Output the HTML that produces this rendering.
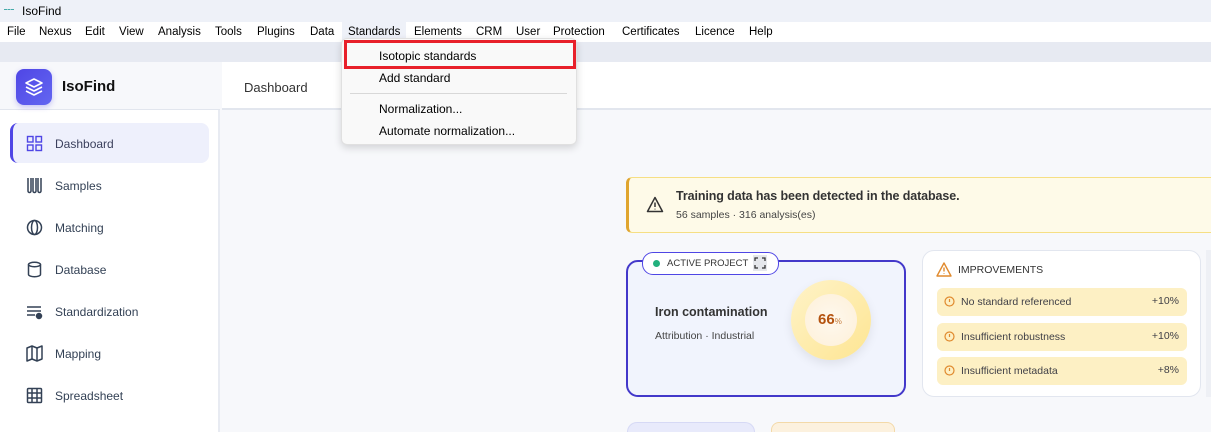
<!DOCTYPE html>
<html><head><meta charset="utf-8"><style>
*{box-sizing:border-box;margin:0;padding:0}
html,body{width:1211px;height:432px;overflow:hidden}
body{position:relative;font-family:"Liberation Sans",sans-serif;background:#f7f8fb;color:#1f2937}
.a{position:absolute;white-space:nowrap}
.menu span{position:absolute;top:26px;font-size:11.5px;color:#000}
.nav{position:absolute;left:55px;font-size:12px;color:#334155;font-weight:500}
.ic{position:absolute;left:26px}
.row{position:absolute;left:937px;width:250px;height:28px;background:#fdf0c4;border-radius:6px;font-size:10.5px;color:#3f3f46}
.row .t{position:absolute;left:24px;top:8px}
.row .v{position:absolute;right:8px;top:7px}
.row svg{position:absolute;left:7px;top:8px}
</style></head><body>
<div class="a" style="left:0;top:0;width:1211px;height:22px;background:#eef1f8"></div>
<div class="a" style="left:4px;top:9px;width:10px;height:2px;border-top:1px dashed #4aa"></div>
<div class="a" style="left:22px;top:4px;font-size:12px;color:#000">IsoFind</div>
<div class="a" style="left:0;top:22px;width:1211px;height:20px;background:#fff"></div>
<div class="a" style="left:342px;top:22px;width:64px;height:20px;background:#eef1f8"></div>
<div class="menu">
<span style="left:7px">File</span><span style="left:39px">Nexus</span><span style="left:85px">Edit</span><span style="left:119px">View</span><span style="left:158px">Analysis</span><span style="left:215px">Tools</span><span style="left:257px">Plugins</span><span style="left:310px">Data</span><span style="left:348px">Standards</span><span style="left:414px">Elements</span><span style="left:476px">CRM</span><span style="left:516px">User</span><span style="left:553px">Protection</span><span style="left:622px">Certificates</span><span style="left:695px">Licence</span><span style="left:749px">Help</span>
</div>
<div class="a" style="left:0;top:42px;width:1211px;height:20px;background:#e7eaf2"></div>
<!-- sidebar -->
<div class="a" style="left:0;top:62px;width:220px;height:370px;background:#fff;border-right:2px solid #e8ebf2"></div>
<div class="a" style="left:0;top:62px;width:220px;height:48px;background:#f7f8fb;border-bottom:1px solid #e2e6ee"></div>
<div class="a" style="left:16px;top:69px;width:36px;height:36px;border-radius:8px;background:linear-gradient(135deg,#4f46e5,#6366f1);box-shadow:0 2px 6px rgba(79,70,229,.3)">
<svg width="36" height="36" viewBox="0 0 36 36" fill="none" stroke="#fff" stroke-width="1.6" stroke-linejoin="round"><path d="M18 10l8 4-8 4-8-4z"/><path d="M10 18l8 4 8-4"/><path d="M10 22l8 4 8-4"/></svg></div>
<div class="a" style="left:62px;top:78px;font-size:15px;font-weight:bold;color:#111">IsoFind</div>
<div class="a" style="left:10px;top:123px;width:199px;height:40px;border-radius:8px;background:#eef0fc;border-left:3px solid #4f46e5"></div>
<svg class="ic" style="top:135px" width="17" height="17" viewBox="0 0 17 17" fill="none" stroke="#4f46e5" stroke-width="1.4"><rect x="1.5" y="1.5" width="5.5" height="5.5"/><rect x="10" y="1.5" width="5.5" height="5.5"/><rect x="1.5" y="10" width="5.5" height="5.5"/><rect x="10" y="10" width="5.5" height="5.5"/></svg>
<div class="nav" style="top:137px;color:#3a3f5c">Dashboard</div>
<svg class="ic" style="top:177px" width="17" height="17" viewBox="0 0 17 17" fill="none" stroke="#334155" stroke-width="1.5"><path d="M2 1v13a1.5 1.5 0 003 0V1M7 1v13a1.5 1.5 0 003 0V1M12 1v13a1.5 1.5 0 003 0V1"/></svg>
<div class="nav" style="top:179px">Samples</div>
<svg class="ic" style="top:219px" width="17" height="17" viewBox="0 0 17 17" fill="none" stroke="#334155" stroke-width="1.5"><circle cx="8.5" cy="8.5" r="7"/><ellipse cx="8.5" cy="8.5" rx="3" ry="7"/></svg>
<div class="nav" style="top:221px">Matching</div>
<svg class="ic" style="top:261px" width="17" height="17" viewBox="0 0 17 17" fill="none" stroke="#334155" stroke-width="1.5"><ellipse cx="8.5" cy="3.5" rx="6" ry="2.2"/><path d="M2.5 3.5v10c0 1.2 2.7 2.2 6 2.2s6-1 6-2.2v-10"/></svg>
<div class="nav" style="top:263px">Database</div>
<svg class="ic" style="top:303px" width="17" height="17" viewBox="0 0 17 17" fill="none" stroke="#334155" stroke-width="1.5"><path d="M1 4h14M1 8h14M1 12h8"/><circle cx="13" cy="13" r="2.5" fill="#334155"/></svg>
<div class="nav" style="top:305px">Standardization</div>
<svg class="ic" style="top:345px" width="17" height="17" viewBox="0 0 17 17" fill="none" stroke="#334155" stroke-width="1.5" stroke-linejoin="round"><path d="M1 3l5-2 5 2 5-2v13l-5 2-5-2-5 2z"/><path d="M6 1v13M11 3v13"/></svg>
<div class="nav" style="top:347px">Mapping</div>
<svg class="ic" style="top:387px" width="17" height="17" viewBox="0 0 17 17" fill="none" stroke="#334155" stroke-width="1.5"><rect x="1.5" y="1.5" width="14" height="14" rx="1"/><path d="M1.5 6h14M1.5 11h14M6 1.5v14M11 1.5v14"/></svg>
<div class="nav" style="top:389px">Spreadsheet</div>
<!-- header -->
<div class="a" style="left:222px;top:62px;width:989px;height:48px;background:#fff;border-bottom:2px solid #e2e6ee"></div>
<div class="a" style="left:244px;top:80px;font-size:13px;color:#333">Dashboard</div>
<!-- alert -->
<div class="a" style="left:626px;top:177px;width:600px;height:56px;background:#fefae8;border:1px solid #f6df84;border-left:3px solid #e0a52e;border-radius:6px"></div>
<svg class="a" style="left:646px;top:196px" width="18" height="17" viewBox="0 0 18 17" fill="none" stroke="#333" stroke-width="1.5" stroke-linejoin="round"><path d="M9 1.5L16.5 15.5H1.5z"/><path d="M9 6.5v4.5M9 12.8v.6"/></svg>
<div class="a" style="left:676px;top:189px;font-size:12.5px;font-weight:bold;color:#333;letter-spacing:-0.1px">Training data has been detected in the database.</div>
<div class="a" style="left:676px;top:209px;font-size:10.5px;color:#444">56 samples · 316 analysis(es)</div>
<!-- active project -->
<div class="a" style="left:626px;top:260px;width:280px;height:137px;border:2px solid #4338ca;border-radius:12px;background:#f1f4fd"></div>
<div class="a" style="left:642px;top:252px;width:137px;height:23px;border:1.5px solid #4f46e5;border-radius:11px;background:#fff"></div>
<div class="a" style="left:653px;top:260px;width:7px;height:7px;border-radius:50%;background:#22b07d"></div>
<div class="a" style="left:667px;top:258px;font-size:9.5px;color:#333">ACTIVE PROJECT</div>
<div class="a" style="left:753px;top:255px;width:14px;height:16px;background:#e5e7eb"></div>
<svg class="a" style="left:754px;top:257px" width="12" height="12" viewBox="0 0 12 12" fill="none" stroke="#333" stroke-width="1.3"><path d="M1 4V1h3M8 1h3v3M11 8v3H8M4 11H1V8"/></svg>
<div class="a" style="left:655px;top:305px;font-size:12.5px;font-weight:bold;color:#333">Iron contamination</div>
<div class="a" style="left:655px;top:330px;font-size:10.5px;color:#444">Attribution · Industrial</div>
<div class="a" style="left:791px;top:280px;width:80px;height:80px;border-radius:50%;background:linear-gradient(135deg,#fff3c8,#fde592);box-shadow:0 4px 10px rgba(0,0,0,.08)"></div>
<div class="a" style="left:805px;top:294px;width:52px;height:52px;border-radius:50%;background:radial-gradient(circle,#fff8ee,#fdf0d8)"></div>
<div class="a" style="left:818px;top:311px;font-size:15px;font-weight:bold;color:#b4530f">66<span style="font-size:8px;font-weight:normal;color:#c47a3a">%</span></div>
<!-- improvements -->
<div class="a" style="left:922px;top:250px;width:279px;height:147px;border:1px solid #e2e6ef;border-radius:12px;background:#fff"></div>
<svg class="a" style="left:936px;top:262px" width="16" height="15" viewBox="0 0 16 15" fill="none" stroke="#e08a2e" stroke-width="1.4" stroke-linejoin="round"><path d="M8 1l7 13H1z"/><path d="M8 5.5v4M8 11.3v.6"/></svg>
<div class="a" style="left:958px;top:264px;font-size:10.5px;color:#333">IMPROVEMENTS</div>
<div class="row" style="top:288px"><svg width="11" height="11" viewBox="0 0 11 11" fill="none" stroke="#e08a2e" stroke-width="1.2"><circle cx="5.5" cy="5.5" r="4.5"/><path d="M5.5 3v3"/></svg><span class="t">No standard referenced</span><span class="v">+10%</span></div>
<div class="row" style="top:323px"><svg width="11" height="11" viewBox="0 0 11 11" fill="none" stroke="#e08a2e" stroke-width="1.2"><circle cx="5.5" cy="5.5" r="4.5"/><path d="M5.5 3v3"/></svg><span class="t">Insufficient robustness</span><span class="v">+10%</span></div>
<div class="row" style="top:357px"><svg width="11" height="11" viewBox="0 0 11 11" fill="none" stroke="#e08a2e" stroke-width="1.2"><circle cx="5.5" cy="5.5" r="4.5"/><path d="M5.5 3v3"/></svg><span class="t">Insufficient metadata</span><span class="v">+8%</span></div>
<div class="a" style="left:1206px;top:250px;width:5px;height:147px;background:#eef0f5"></div>
<!-- bottom cards -->
<div class="a" style="left:627px;top:422px;width:128px;height:10px;border:1px solid #d6d9f5;border-bottom:none;border-radius:10px 10px 0 0;background:#e8eafb"></div>
<div class="a" style="left:771px;top:422px;width:124px;height:10px;border:1px solid #f3d9a8;border-bottom:none;border-radius:8px 8px 0 0;background:#fcf1de"></div>
<!-- dropdown -->
<div class="a" style="left:341px;top:38px;width:236px;height:107px;background:#f9f9f9;border:1px solid #e0e0e0;border-radius:6px;box-shadow:0 3px 8px rgba(0,0,0,.15)"></div>
<div class="a" style="left:344px;top:40px;width:232px;height:29px;border:3px solid #e8202a"></div>
<div class="a" style="left:379px;top:49px;font-size:12px;color:#000">Isotopic standards</div>
<div class="a" style="left:379px;top:71px;font-size:12px;color:#000">Add standard</div>
<div class="a" style="left:350px;top:93px;width:217px;height:1px;background:#d8d8d8"></div>
<div class="a" style="left:379px;top:102px;font-size:12px;color:#000">Normalization...</div>
<div class="a" style="left:379px;top:124px;font-size:12px;color:#000">Automate normalization...</div>
</body></html>
